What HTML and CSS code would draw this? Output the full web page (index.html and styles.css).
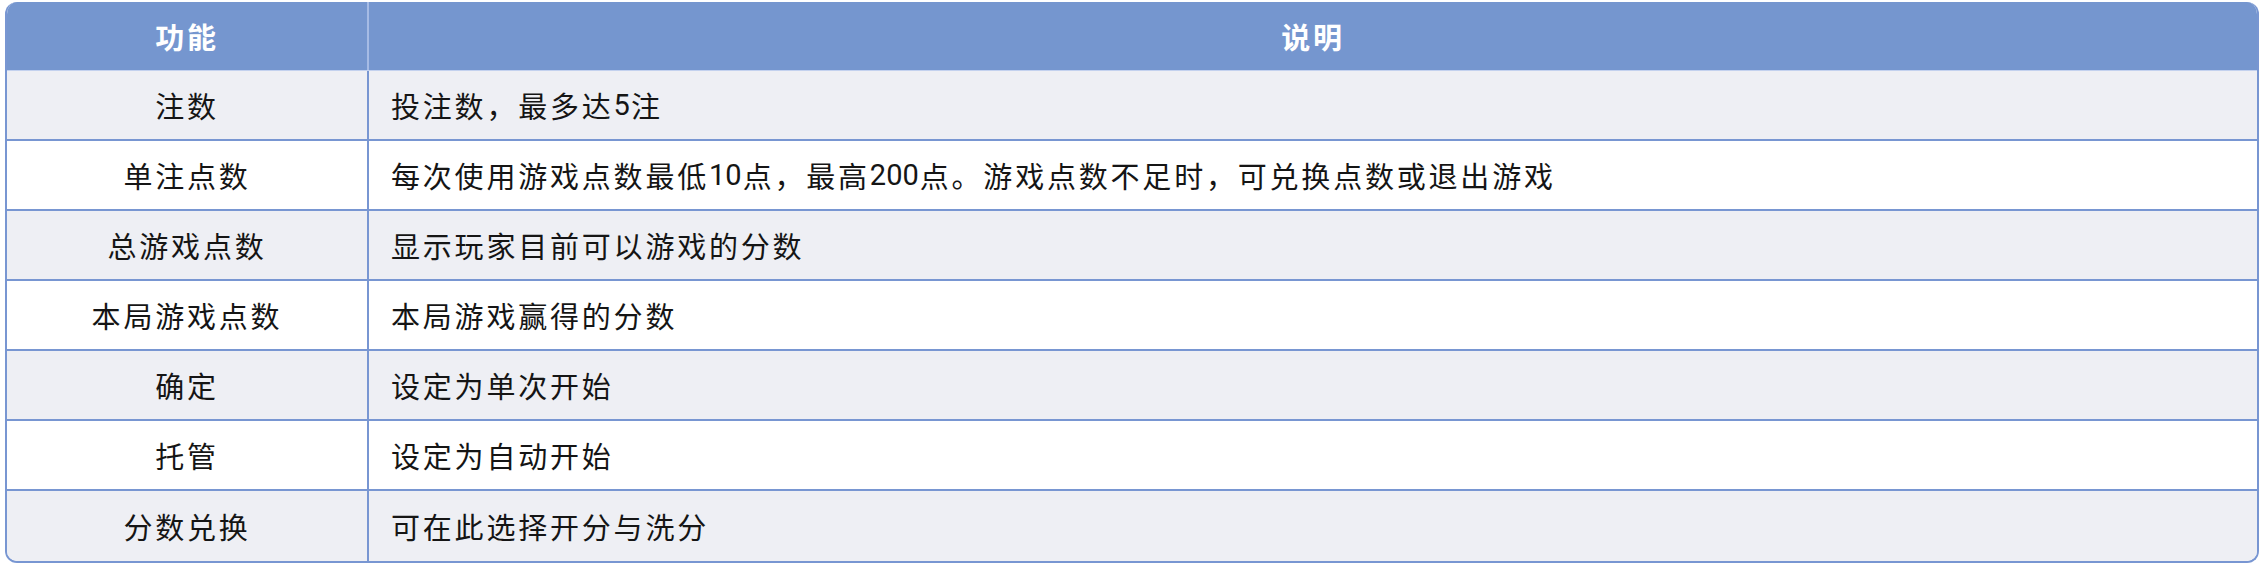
FILE: index.html
```html
<!DOCTYPE html>
<html lang="zh-CN">
<head>
<meta charset="utf-8">
<title>功能说明</title>
<link rel="stylesheet" href="styles.css">
</head>
<body>
<div class="table">
  <div class="row head">
    <div class="cell name">功能</div>
    <div class="cell desc">说明</div>
  </div>
  <div class="row stripe">
    <div class="cell name">注数</div>
    <div class="cell desc">投注数，最多达<span class="num">5</span>注</div>
  </div>
  <div class="row">
    <div class="cell name">单注点数</div>
    <div class="cell desc">每次使用游戏点数最低<span class="num">10</span>点，最高<span class="num">200</span>点。游戏点数不足时，可兑换点数或退出游戏</div>
  </div>
  <div class="row stripe">
    <div class="cell name">总游戏点数</div>
    <div class="cell desc">显示玩家目前可以游戏的分数</div>
  </div>
  <div class="row">
    <div class="cell name">本局游戏点数</div>
    <div class="cell desc">本局游戏赢得的分数</div>
  </div>
  <div class="row stripe">
    <div class="cell name">确定</div>
    <div class="cell desc">设定为单次开始</div>
  </div>
  <div class="row">
    <div class="cell name">托管</div>
    <div class="cell desc">设定为自动开始</div>
  </div>
  <div class="row stripe last">
    <div class="cell name">分数兑换</div>
    <div class="cell desc">可在此选择开分与洗分</div>
  </div>
</div>
</body>
</html>
```
FILE: styles.css
```css
html, body {
  margin: 0;
  padding: 0;
  background: #ffffff;
}
body {
  padding: 2px 3px 0 5px;
  font-family: "Noto Sans CJK SC", "Noto Sans", sans-serif;
  color: #151515;
}
.table {
  width: 2254px;
  box-sizing: border-box;
  border: 2px solid #7896d2;
  border-top: 0;
  border-radius: 12px;
  overflow: hidden;
}
.row {
  display: grid;
  grid-template-columns: 362px 1fr;
  height: 70px;
  box-sizing: border-box;
  border-bottom: 2px solid #7896d2;
  background: #ffffff;
}
.row.last {
  border-bottom: 0;
}
.row.stripe {
  background: #eeeff4;
}
.row.head {
  background: #7596cf;
  height: 69px;
  border-bottom: 1px solid #c3d1ee;
  color: #ffffff;
  font-weight: 700;
}
.cell {
  display: flex;
  align-items: center;
  font-size: 29px;
  letter-spacing: 2.8px;
  line-height: 1;
  white-space: nowrap;
}
.cell.name {
  justify-content: center;
  border-right: 2px solid #7896d2;
}
.cell.desc {
  padding-left: 22px;
}
.num {
  font-family: Roboto, "Noto Sans", sans-serif;
  letter-spacing: 0;
  margin-right: 1px;
}
.head .cell.name {
  border-right-color: #a6bbe5;
}
.head .cell.desc {
  justify-content: center;
  padding-left: 0;
}
```
